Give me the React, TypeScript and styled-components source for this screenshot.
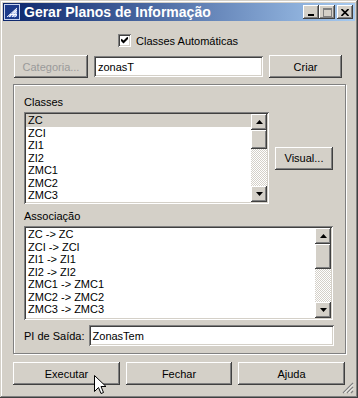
import React from "react";
import styled, { createGlobalStyle, css } from "styled-components";

const GlobalStyle = createGlobalStyle`
  html, body {
    margin: 0;
    padding: 0;
    background: #d4d0c8;
  }
  body {
    font-family: "Liberation Sans", Arial, sans-serif;
    font-size: 11px;
    color: #000;
  }
`;

// 3D borders of the classic look
const raised = css`
  box-shadow: inset -1px -1px #404040, inset 1px 1px #ffffff,
    inset -2px -2px #808080, inset 2px 2px #d4d0c8;
`;
const sunken = css`
  box-shadow: inset 1px 1px #808080, inset -1px -1px #ffffff,
    inset 2px 2px #404040, inset -2px -2px #d4d0c8;
`;

const Window = styled.div`
  position: relative;
  width: 358px;
  height: 398px;
  box-sizing: border-box;
  padding: 3px;
  background: #d4d0c8;
  box-shadow: inset -1px -1px #404040, inset 1px 1px #d4d0c8,
    inset -2px -2px #808080, inset 2px 2px #ffffff;
  display: flex;
  flex-direction: column;
  overflow: hidden;
`;

const TitleBar = styled.div`
  height: 18px;
  display: flex;
  align-items: center;
  padding: 0 2px 0 1px;
  background: linear-gradient(to right, #0a246a, #a6caf0);
`;

const TitleText = styled.span`
  flex: 1;
  margin-left: 4px;
  color: #fff;
  font-weight: bold;
  font-size: 14px;
  white-space: nowrap;
`;

const CaptionButtons = styled.div`
  display: flex;
  align-items: center;
`;

const CaptionButton = styled.div<{ $gap?: number }>`
  width: 16px;
  height: 14px;
  margin-left: ${(p) => p.$gap ?? 0}px;
  background: #d4d0c8;
  ${raised};
  display: flex;
  align-items: center;
  justify-content: center;
`;

const Client = styled.div`
  flex: 1;
  display: flex;
  flex-direction: column;
  padding: 0 0 0 10px;
`;

const CheckRow = styled.label`
  display: flex;
  align-items: center;
  gap: 5px;
  margin-top: 13px;
  padding-left: 105px;
  height: 13px;
`;

const CheckBox = styled.span`
  width: 13px;
  height: 13px;
  box-sizing: border-box;
  background: #fff;
  ${sunken};
  display: flex;
  align-items: center;
  justify-content: center;
`;

const ToolRow = styled.div`
  display: flex;
  align-items: center;
  gap: 6px;
  margin-top: 8px;
  padding-left: 1px;
`;

const Button = styled.div<{ $width: number; $disabled?: boolean }>`
  width: ${(p) => p.$width}px;
  height: 23px;
  box-sizing: border-box;
  background: #d4d0c8;
  ${raised};
  display: flex;
  align-items: center;
  justify-content: center;
  color: ${(p) => (p.$disabled ? "#9a9a9a" : "#000")};
  flex-shrink: 0;
`;

const TextField = styled.div<{ $width?: number }>`
  ${(p) => (p.$width ? `width: ${p.$width}px; flex-shrink: 0;` : "flex: 1;")}
  height: 21px;
  box-sizing: border-box;
  background: #fff;
  ${sunken};
  display: flex;
  align-items: center;
  padding-left: 4px;
`;

const GroupBox = styled.div`
  margin-top: 6px;
  width: 333px;
  height: 270px;
  box-sizing: border-box;
  border: 1px solid #808080;
  box-shadow: inset 1px 1px #ffffff, 1px 1px #ffffff;
  padding: 11px 11px 0 10px;
  display: flex;
  flex-direction: column;
`;

const FieldLabel = styled.div<{ $top?: number }>`
  height: 13px;
  line-height: 13px;
  margin-top: ${(p) => p.$top ?? 0}px;
`;

const ListRow = styled.div`
  display: flex;
  align-items: center;
  gap: 6px;
  margin-top: 3px;
`;

const ListBox = styled.div<{ $width: number; $height: number }>`
  width: ${(p) => p.$width}px;
  height: ${(p) => p.$height}px;
  box-sizing: border-box;
  padding: 2px;
  background: #fff;
  ${sunken};
  display: flex;
`;

const Items = styled.div`
  flex: 1;
  overflow: hidden;
`;

const Item = styled.div<{ $selected?: boolean }>`
  height: 12.5px;
  line-height: 12.5px;
  padding-left: 2px;
  white-space: pre;
  background: ${(p) => (p.$selected ? "#d4d0c8" : "transparent")};
`;

const ScrollBar = styled.div`
  width: 16px;
  display: flex;
  flex-direction: column;
`;

const ScrollArrow = styled.div`
  height: 16px;
  background: #d4d0c8;
  ${raised};
  display: flex;
  align-items: center;
  justify-content: center;
`;

const Thumb = styled.div<{ $size: number }>`
  height: ${(p) => p.$size}px;
  background: #d4d0c8;
  ${raised};
`;

const Track = styled.div`
  flex: 1;
  background-color: #d4d0c8;
  background-image: conic-gradient(
    #ffffff 25%,
    #d4d0c8 0 50%,
    #ffffff 0 75%,
    #d4d0c8 0
  );
  background-size: 2px 2px;
`;

const OutputRow = styled.div`
  display: flex;
  align-items: center;
  gap: 4px;
  margin-top: 5px;
`;

const BottomBar = styled.div`
  display: flex;
  gap: 6px;
  margin-top: 8px;
`;

const Grip = styled.svg`
  position: absolute;
  right: 4px;
  bottom: 4px;
`;

const Cursor = styled.svg`
  position: absolute;
  left: 94px;
  top: 375px;
`;

const Arrow = ({ down }: { down?: boolean }) => (
  <svg width="7" height="4" viewBox="0 0 7 4">
    <path d={down ? "M0 0h7L3.5 4z" : "M3.5 0L7 4H0z"} fill="#000" />
  </svg>
);

const Scroller = ({ thumb }: { thumb: number }) => (
  <ScrollBar>
    <ScrollArrow>
      <Arrow />
    </ScrollArrow>
    <Thumb $size={thumb} />
    <Track />
    <ScrollArrow>
      <Arrow down />
    </ScrollArrow>
  </ScrollBar>
);

const classes = ["ZC", "ZCI", "ZI1", "ZI2", "ZMC1", "ZMC2", "ZMC3"];

export default function App() {
  return (
    <>
      <GlobalStyle />
      <Window>
        <TitleBar>
          <svg width="16" height="16" viewBox="0 0 16 16">
            <rect x="0.5" y="0.5" width="15" height="15" fill="#1c3a8a" stroke="#c8d4f0" />
            <path d="M3 13 L13 13 L13 4 Z" fill="#4a6ac8" />
            <path
              d="M3 13 L13 4 M5 13 L13 6 M8 13 L13 8.5 M10.5 13 L13 11 M6 10.5 L13 10.5 M9 8 L13 8 M11 6 L13 6 M6 10.5 L6 13 M9 8 L9 13 M11 6 L11 13"
              stroke="#ffffff"
              strokeWidth="0.9"
              fill="none"
            />
          </svg>
          <TitleText>Gerar Planos de Informação</TitleText>
          <CaptionButtons>
            <CaptionButton>
              <svg width="8" height="8" viewBox="0 0 8 8">
                <rect x="1" y="6" width="6" height="2" fill="#000" />
              </svg>
            </CaptionButton>
            <CaptionButton>
              <svg width="9" height="9" viewBox="0 0 9 9">
                <rect x="0.5" y="0.5" width="8" height="8" fill="none" stroke="#808080" />
                <rect x="0" y="0" width="9" height="2" fill="#808080" />
              </svg>
            </CaptionButton>
            <CaptionButton $gap={2}>
              <svg width="8" height="7" viewBox="0 0 8 7">
                <path d="M0.5 0 L7.5 7 M7.5 0 L0.5 7" stroke="#000" strokeWidth="1.6" />
              </svg>
            </CaptionButton>
          </CaptionButtons>
        </TitleBar>

        <Client>
          <CheckRow>
            <CheckBox>
              <svg width="7" height="7" viewBox="0 0 7 7">
                <path d="M0 2.5 L2.5 5 L7 0.5" stroke="#000" strokeWidth="2" fill="none" />
              </svg>
            </CheckBox>
            Classes Automáticas
          </CheckRow>

          <ToolRow>
            <Button $width={74} $disabled>
              Categoria...
            </Button>
            <TextField $width={169}>zonasT</TextField>
            <Button $width={73}>Criar</Button>
          </ToolRow>

          <GroupBox>
            <FieldLabel>Classes</FieldLabel>
            <ListRow>
              <ListBox $width={245} $height={92}>
                <Items>
                  {classes.map((c, i) => (
                    <Item key={c} $selected={i === 0}>
                      {c}
                    </Item>
                  ))}
                </Items>
                <Scroller thumb={19} />
              </ListBox>
              <Button $width={58}>Visual...</Button>
            </ListRow>

            <FieldLabel $top={6}>Associação</FieldLabel>
            <ListRow>
              <ListBox $width={309} $height={94}>
                <Items>
                  {classes.map((c) => (
                    <Item key={c}>{`${c} -> ${c}`}</Item>
                  ))}
                </Items>
                <Scroller thumb={25} />
              </ListBox>
            </ListRow>

            <OutputRow>
              <span>PI de Saída:</span>
              <TextField>ZonasTem</TextField>
            </OutputRow>
          </GroupBox>

          <BottomBar>
            <Button $width={107}>Executar</Button>
            <Button $width={106}>Fechar</Button>
            <Button $width={107}>Ajuda</Button>
          </BottomBar>
        </Client>

        <Grip width="12" height="12" viewBox="0 0 12 12">
          <path d="M11 1 L1 11 M11 5 L5 11 M11 9 L9 11" stroke="#808080" strokeWidth="1.2" />
          <path d="M11 2.5 L2.5 11 M11 6.5 L6.5 11" stroke="#ffffff" strokeWidth="1" />
        </Grip>

        <Cursor width="13" height="21" viewBox="0 0 13 21">
          <path
            d="M0.5 0.5 L0.5 16.5 L4.5 12.5 L7 18.5 L9.5 17.5 L7 11.5 L12 11.5 Z"
            fill="#ffffff"
            stroke="#000"
            strokeWidth="1"
            strokeLinejoin="miter"
          />
        </Cursor>
      </Window>
    </>
  );
}
